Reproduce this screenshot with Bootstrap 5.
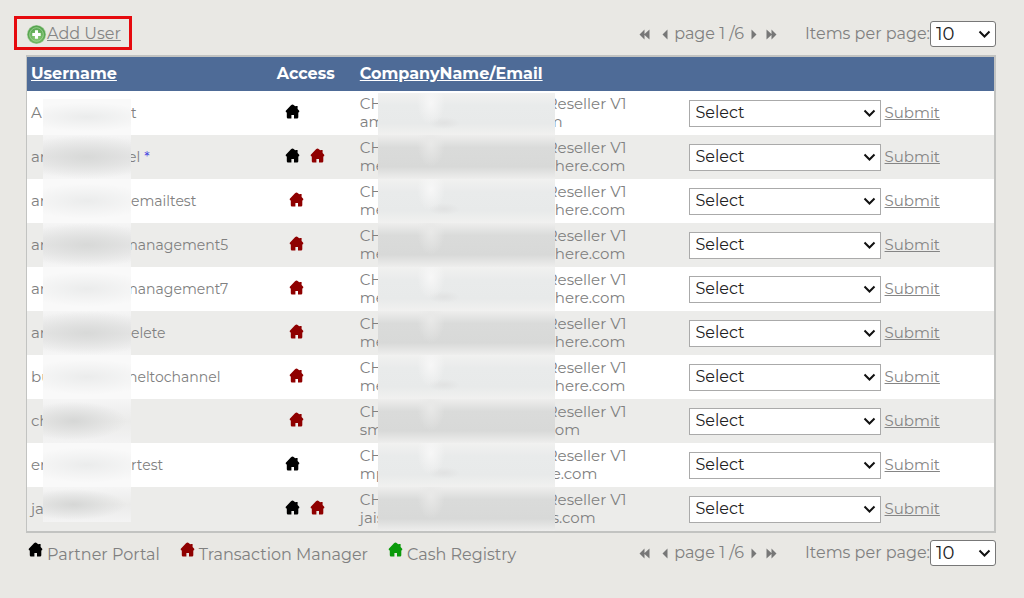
<!DOCTYPE html>
<html lang="en">
<head>
<meta charset="utf-8">
<meta name="viewport" content="width=device-width, initial-scale=1">
<title>Users</title>
<link href="https://cdn.jsdelivr.net/npm/bootstrap@5.3.0/dist/css/bootstrap.min.css" rel="stylesheet">
<style>
  body { background: #e9e8e4; color: #808080; font-family: Montserrat, Inter, sans-serif; font-size: 16px; line-height: 20px; }
  a, a:hover { color: #858585; }
  .page { padding: 16px 28px 16px 26px; }
  .bar { height: 34px; margin-bottom: 5px; padding-top: 2px; }
  .add-box { height: 34px; margin: -2px 0 0 -12px; padding: 2px 8px 0 9px; border: 3px solid #e60a0e; }
  .pager { gap: 6px; }
  .pager svg { display: block; fill: #777; }
  .pager .per-page { margin-left: 22px; }
  .pager .form-select { width: 66px; height: 26px; border: 1px solid #777; border-radius: 3px; padding: 0 20px 0 5px; font-size: 18px; }
  .form-select { color: #222; background-color: #fff; background-position: right 4px center; background-size: 13px 9px; line-height: 22px;
    background-image: url("data:image/svg+xml,%3Csvg xmlns='http://www.w3.org/2000/svg' viewBox='0 0 13 9'%3E%3Cpath d='M1.5 1.5l5 5 5-5' fill='none' stroke='%23111' stroke-width='2'/%3E%3C/svg%3E"); }
  .users { table-layout: fixed; border: 2px solid #c2c3c1; border-left-width: 1px; border-collapse: separate; border-spacing: 0; width: 100%; font-size: 15px; line-height: 18px; }
  .users th { height: 34px; padding: 0 4px; background: #4e6b97; color: #fff; font-size: 16px; font-weight: 700; }
  .users th a { color: #fff; }
  .users td { height: 44px; padding: 0 4px; background: #fff; }
  .users tr:nth-child(even) td { background: #ececea; }
  .users .access { padding-left: 8px; }
  .c-user { width: 25%; } .c-access { width: 9%; } .c-company { width: 34%; }
  .users .form-select { width: 192px; height: 27px; border: 1px solid #aaa; border-radius: 0; padding: 0 20px 0 6px; font-size: 16px; }
  .masked { height: 44px; white-space: nowrap; }
  .masked > span { flex: none; }
  .masked .tail { display: flex; flex-direction: column; }
  .user { font-size: 14px; }
  .start-user { width: 12px; font-size: 15px; } .start-company { width: 18px; }
  .smear { align-self: stretch; position: relative; z-index: 1; }
  .smear-user { width: 88px; background: radial-gradient(ellipse 75% 40% at 50% 50%, #ebecec, #f9f9f900), #f9f9f9; }
  tr:nth-child(even) .smear-user { background: radial-gradient(ellipse 80% 50% at 50% 50%, #d8d9d8, #d8d9d800), linear-gradient(#f5f5f5, #e8e8e8 50%, #f6f6f6); }
  tr:nth-child(even) .smear-short { background: radial-gradient(ellipse 60% 44% at 35% 50%, #d6d7d6, #d6d7d600), linear-gradient(#f5f5f5, #ebebea 50%, #f3f3f3); }
  tr:first-child .smear-user { margin-top: 8px; }
  tr:first-child .smear-company { margin-top: 2px; }
  tr:last-child .smear-user { margin-bottom: 9px; }
  .smear-company { width: 177px; background: radial-gradient(ellipse 14px 22px at 53px 10px, #f7f7f7, #f4f4f400), radial-gradient(ellipse 16px 6px at 66px 30px, #e1e2e2, #e1e2e200), linear-gradient(#f1f1f0, #e9ebeb 30%, #e8eaea 72%, #f1f1f0); }
  tr:nth-child(even) .smear-company { background: radial-gradient(ellipse 14px 24px at 53px 8px, #e9e9e8, #e6e6e500), linear-gradient(#eeeeed, #dadbda 28%, #d8d9d8 72%, #eeeeed); }
  .cut { margin-left: -8px; }
  .cut-sm { margin-left: -3px; }
  .homes { gap: 10px; padding-left: 8px; margin-bottom: 4px; }
  .homes.single { padding-left: 12px; }
  .house { width: 15px; height: 15px; display: block; flex: none; }
  .portal { fill: #000; } .manager { fill: #8f0000; } .cash { fill: #0a9a0a; }
  .star { color: #4545e0; margin-left: 4px; }
  .foot { padding-top: 7px; }
  .legend { gap: 20px; padding-left: 2px; }
  .legend .house { margin: 2px 4px 0 0; }
  .legend .lbl { padding-top: 5px; }
</style>
</head>
<body>
<svg class="d-none" xmlns="http://www.w3.org/2000/svg">
  <symbol id="house" viewBox="0 0 15 15"><path d="M7.5 .4 Q8.2 .4 9 1.3 L10.4 2.6 V2 H12.6 V4.9 L14.2 6.8 Q14.8 8.4 13.3 8.6 V13.2 Q13.3 14.4 12 14.4 H9 V11 H6.4 V14.4 H3 Q1.8 14.4 1.8 13.2 V8.6 Q.2 8.4 .8 6.8 L6 1.3 Q6.8 .4 7.5 .4Z"/></symbol>
  <symbol id="first" viewBox="0 0 11 11"><path d="M5.5 .5V10.5L.5 5.5ZM10.5 .5V10.5L5 5.5Z"/></symbol>
  <symbol id="prev" viewBox="0 0 6 11"><path d="M5.5 .5V10.5L.5 5.5Z"/></symbol>
  <symbol id="next" viewBox="0 0 6 11"><path d="M.5 .5V10.5L5.5 5.5Z"/></symbol>
  <symbol id="last" viewBox="0 0 11 11"><path d="M.5 .5V10.5L6 5.5ZM5.5 .5V10.5L10.5 5.5Z"/></symbol>
</svg>
<main class="page">
  <div class="bar d-flex justify-content-between align-items-center">
    <div class="add-box d-flex align-items-center">
      <svg width="21" height="21" viewBox="0 0 21 21"><defs><radialGradient id="g" cx=".5" cy=".65"><stop offset="0" stop-color="#94d07c"/><stop offset="1" stop-color="#57a550"/></radialGradient></defs><circle cx="10.5" cy="10.5" r="9.6" fill="#a9cfa0"/><circle cx="10.5" cy="10.5" r="8.9" fill="url(#g)"/><circle cx="10.5" cy="10.5" r="6.8" fill="none" stroke="#a7d69a" stroke-width=".8"/><path d="M10.5 6.3v8.4M6.3 10.5h8.4" stroke="#fff" stroke-width="3"/></svg>
      <a href="#">Add User</a>
    </div>
    <div class="pager d-flex align-items-center">
      <a href="#" aria-label="First"><svg width="11" height="11"><use href="#first"/></svg></a>
      <a href="#" aria-label="Previous"><svg width="12" height="11" viewBox="-6 0 12 11"><use href="#prev" width="6" height="11"/></svg></a>
      <span>page 1 /6</span>
      <a href="#" aria-label="Next"><svg width="10" height="11" viewBox="-1 0 10 11"><use href="#next" width="6" height="11"/></svg></a>
      <a href="#" aria-label="Last"><svg width="11" height="11"><use href="#last"/></svg></a>
      <div class="per-page d-flex align-items-center"><label for="top-count">Items per page:</label><select id="top-count" class="form-select"><option>10</option><option>20</option></select></div>
    </div>
  </div>

  <table class="users">
    <colgroup><col class="c-user"><col class="c-access"><col class="c-company"><col></colgroup>
    <thead><tr><th><a href="#">Username</a></th><th class="access">Access</th><th><a href="#">CompanyName/Email</a></th><th></th></tr></thead>
    <tbody>
      <tr>
        <td><div class="masked user d-flex align-items-center"><span class="start-user">A</span><span class="smear smear-user"></span><span>t</span></div></td>
        <td class="access"><div class="homes d-flex"><svg class="house portal"><use href="#house"/></svg></div></td>
        <td><div class="masked d-flex align-items-center"><span class="start-company">CH<br>am</span><span class="smear smear-company"></span><span class="tail"><span class="cut">Reseller V1</span><span class="cut">m</span></span></div></td>
        <td><div class="d-flex align-items-center gap-1"><select class="form-select" aria-label="Action"><option>Select</option></select><a href="#">Submit</a></div></td>
      </tr>
      <tr>
        <td><div class="masked user d-flex align-items-center"><span class="start-user">ar</span><span class="smear smear-user"></span><span class="cut-sm">el</span><span class="star">*</span></div></td>
        <td class="access"><div class="homes d-flex"><svg class="house portal"><use href="#house"/></svg><svg class="house manager"><use href="#house"/></svg></div></td>
        <td><div class="masked d-flex align-items-center"><span class="start-company">CH<br>me</span><span class="smear smear-company"></span><span class="tail"><span class="cut">Reseller V1</span><span>here.com</span></span></div></td>
        <td><div class="d-flex align-items-center gap-1"><select class="form-select" aria-label="Action"><option>Select</option></select><a href="#">Submit</a></div></td>
      </tr>
      <tr>
        <td><div class="masked user d-flex align-items-center"><span class="start-user">ar</span><span class="smear smear-user"></span><span>emailtest</span></div></td>
        <td class="access"><div class="homes single d-flex"><svg class="house manager"><use href="#house"/></svg></div></td>
        <td><div class="masked d-flex align-items-center"><span class="start-company">CH<br>me</span><span class="smear smear-company"></span><span class="tail"><span class="cut">Reseller V1</span><span>here.com</span></span></div></td>
        <td><div class="d-flex align-items-center gap-1"><select class="form-select" aria-label="Action"><option>Select</option></select><a href="#">Submit</a></div></td>
      </tr>
      <tr>
        <td><div class="masked user d-flex align-items-center"><span class="start-user">ar</span><span class="smear smear-user"></span><span class="cut">management5</span></div></td>
        <td class="access"><div class="homes single d-flex"><svg class="house manager"><use href="#house"/></svg></div></td>
        <td><div class="masked d-flex align-items-center"><span class="start-company">CH<br>me</span><span class="smear smear-company"></span><span class="tail"><span class="cut">Reseller V1</span><span>here.com</span></span></div></td>
        <td><div class="d-flex align-items-center gap-1"><select class="form-select" aria-label="Action"><option>Select</option></select><a href="#">Submit</a></div></td>
      </tr>
      <tr>
        <td><div class="masked user d-flex align-items-center"><span class="start-user">ar</span><span class="smear smear-user"></span><span class="cut">management7</span></div></td>
        <td class="access"><div class="homes single d-flex"><svg class="house manager"><use href="#house"/></svg></div></td>
        <td><div class="masked d-flex align-items-center"><span class="start-company">CH<br>me</span><span class="smear smear-company"></span><span class="tail"><span class="cut">Reseller V1</span><span>here.com</span></span></div></td>
        <td><div class="d-flex align-items-center gap-1"><select class="form-select" aria-label="Action"><option>Select</option></select><a href="#">Submit</a></div></td>
      </tr>
      <tr>
        <td><div class="masked user d-flex align-items-center"><span class="start-user">ar</span><span class="smear smear-user"></span><span>elete</span></div></td>
        <td class="access"><div class="homes single d-flex"><svg class="house manager"><use href="#house"/></svg></div></td>
        <td><div class="masked d-flex align-items-center"><span class="start-company">CH<br>me</span><span class="smear smear-company"></span><span class="tail"><span class="cut">Reseller V1</span><span>here.com</span></span></div></td>
        <td><div class="d-flex align-items-center gap-1"><select class="form-select" aria-label="Action"><option>Select</option></select><a href="#">Submit</a></div></td>
      </tr>
      <tr>
        <td><div class="masked user d-flex align-items-center"><span class="start-user">bu</span><span class="smear smear-user"></span><span class="cut-sm">neltochannel</span></div></td>
        <td class="access"><div class="homes single d-flex"><svg class="house manager"><use href="#house"/></svg></div></td>
        <td><div class="masked d-flex align-items-center"><span class="start-company">CH<br>me</span><span class="smear smear-company"></span><span class="tail"><span class="cut">Reseller V1</span><span>here.com</span></span></div></td>
        <td><div class="d-flex align-items-center gap-1"><select class="form-select" aria-label="Action"><option>Select</option></select><a href="#">Submit</a></div></td>
      </tr>
      <tr>
        <td><div class="masked user d-flex align-items-center"><span class="start-user">ch</span><span class="smear smear-user smear-short"></span></div></td>
        <td class="access"><div class="homes single d-flex"><svg class="house manager"><use href="#house"/></svg></div></td>
        <td><div class="masked d-flex align-items-center"><span class="start-company">CH<br>sm</span><span class="smear smear-company"></span><span class="tail"><span class="cut">Reseller V1</span><span>om</span></span></div></td>
        <td><div class="d-flex align-items-center gap-1"><select class="form-select" aria-label="Action"><option>Select</option></select><a href="#">Submit</a></div></td>
      </tr>
      <tr>
        <td><div class="masked user d-flex align-items-center"><span class="start-user">er</span><span class="smear smear-user"></span><span>rtest</span></div></td>
        <td class="access"><div class="homes d-flex"><svg class="house portal"><use href="#house"/></svg></div></td>
        <td><div class="masked d-flex align-items-center"><span class="start-company">CH<br>mp</span><span class="smear smear-company"></span><span class="tail"><span class="cut">Reseller V1</span><span class="cut-sm">e.com</span></span></div></td>
        <td><div class="d-flex align-items-center gap-1"><select class="form-select" aria-label="Action"><option>Select</option></select><a href="#">Submit</a></div></td>
      </tr>
      <tr>
        <td><div class="masked user d-flex align-items-center"><span class="start-user">ja</span><span class="smear smear-user smear-short"></span></div></td>
        <td class="access"><div class="homes d-flex"><svg class="house portal"><use href="#house"/></svg><svg class="house manager"><use href="#house"/></svg></div></td>
        <td><div class="masked d-flex align-items-center"><span class="start-company">CH<br>jais</span><span class="smear smear-company"></span><span class="tail"><span class="cut">Reseller V1</span><span class="cut-sm">s.com</span></span></div></td>
        <td><div class="d-flex align-items-center gap-1"><select class="form-select" aria-label="Action"><option>Select</option></select><a href="#">Submit</a></div></td>
      </tr>
    </tbody>
  </table>

  <div class="foot d-flex justify-content-between align-items-start">
    <div class="legend d-flex">
      <div class="d-flex"><svg class="house portal"><use href="#house"/></svg><span class="lbl">Partner Portal</span></div>
      <div class="d-flex"><svg class="house manager"><use href="#house"/></svg><span class="lbl">Transaction Manager</span></div>
      <div class="d-flex"><svg class="house cash"><use href="#house"/></svg><span class="lbl">Cash Registry</span></div>
    </div>
    <div class="pager d-flex align-items-center">
      <a href="#" aria-label="First"><svg width="11" height="11"><use href="#first"/></svg></a>
      <a href="#" aria-label="Previous"><svg width="12" height="11" viewBox="-6 0 12 11"><use href="#prev" width="6" height="11"/></svg></a>
      <span>page 1 /6</span>
      <a href="#" aria-label="Next"><svg width="10" height="11" viewBox="-1 0 10 11"><use href="#next" width="6" height="11"/></svg></a>
      <a href="#" aria-label="Last"><svg width="11" height="11"><use href="#last"/></svg></a>
      <div class="per-page d-flex align-items-center"><label for="bottom-count">Items per page:</label><select id="bottom-count" class="form-select"><option>10</option><option>20</option></select></div>
    </div>
  </div>
</main>
<script src="https://cdn.jsdelivr.net/npm/bootstrap@5.3.0/dist/js/bootstrap.bundle.min.js"></script>
</body>
</html>
